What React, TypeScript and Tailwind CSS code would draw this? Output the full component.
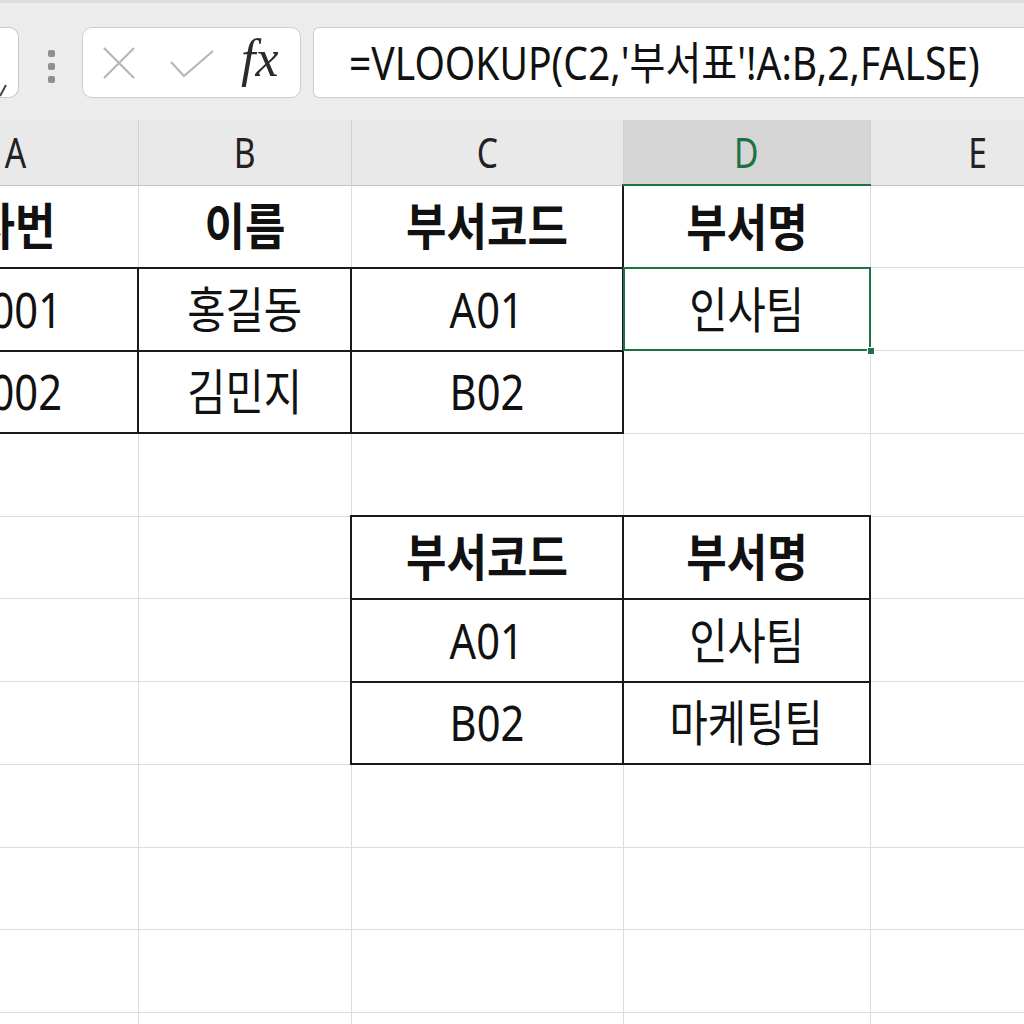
import React from "react";

type Cell = {
  text?: string;
  bold?: boolean;
  border?: string;
  selected?: boolean;
};

const GRID = "border border-[#dcdcdc]";
const BOX = "border-2 border-[#1a1a1a]";

const rows: Cell[][] = [
  [
    { text: "사번", bold: true, border: "border border-[#dcdcdc] border-b-2 border-b-[#1a1a1a]" },
    { text: "이름", bold: true, border: "border border-[#dcdcdc] border-b-2 border-b-[#1a1a1a]" },
    { text: "부서코드", bold: true, border: "border border-[#dcdcdc] border-b-2 border-b-[#1a1a1a] border-r-2 border-r-[#1a1a1a]" },
    { text: "부서명", bold: true },
    {},
  ],
  [{ text: "E001", border: BOX }, { text: "홍길동", border: BOX }, { text: "A01", border: BOX }, { text: "인사팀", selected: true }, {}],
  [{ text: "E002", border: BOX }, { text: "김민지", border: BOX }, { text: "B02", border: BOX }, {}, {}],
  [{}, {}, {}, {}, {}],
  [{}, {}, { text: "부서코드", bold: true, border: BOX }, { text: "부서명", bold: true, border: BOX }, {}],
  [{}, {}, { text: "A01", border: BOX }, { text: "인사팀", border: BOX }, {}],
  [{}, {}, { text: "B02", border: BOX }, { text: "마케팅팀", border: BOX }, {}],
  [{}, {}, {}, {}, {}],
  [{}, {}, {}, {}, {}],
  [{}, {}, {}, {}, {}],
  [{}, {}, {}, {}, {}],
];

const letters = ["A", "B", "C", "D", "E"];

function FormulaBar() {
  return (
    <div className="h-[120px] bg-[#ececec] border-t-[3px] border-[#dedede] flex items-start pt-[24px]">
      {/* name box, mostly scrolled off */}
      <div className="relative w-[19px] h-[71px] bg-white border border-[#c9c9c9] border-l-0 rounded-r-[10px] overflow-hidden">
        <svg className="absolute left-0 top-[54px]" width="8" height="16" viewBox="0 0 8 16">
          <path d="M0 14 L6 3" stroke="#444" strokeWidth="2" fill="none" />
        </svg>
      </div>
      <div className="ml-[29px] mt-[23px] flex flex-col gap-[6px]">
        <span className="w-[7px] h-[7px] rounded-[2px] bg-[#8f8f8f]" />
        <span className="w-[7px] h-[7px] rounded-[2px] bg-[#8f8f8f]" />
        <span className="w-[7px] h-[7px] rounded-[2px] bg-[#8f8f8f]" />
      </div>
      <div className="ml-[27px] w-[219px] h-[71px] bg-white border border-[#cdcdcd] rounded-[10px] flex items-center">
        <svg className="ml-[19px]" width="34" height="34" viewBox="0 0 34 34">
          <path d="M2 2 L32 32 M32 2 L2 32" stroke="#b7b7b7" strokeWidth="2.2" fill="none" />
        </svg>
        <svg className="ml-[33px] mt-[2px]" width="46" height="32" viewBox="0 0 46 32">
          <path d="M2 14 L15 28 L44 3" stroke="#b7b7b7" strokeWidth="2.2" fill="none" />
        </svg>
        <span className="ml-[26px] font-['Liberation_Serif',serif] italic text-[52px] leading-none text-[#2b2b2b] -mt-[8px]">
          fx
        </span>
      </div>
      <div className="ml-[12px] flex-1 h-[71px] bg-white border border-[#cdcdcd] border-r-0 rounded-l-[6px] flex items-center pl-[35px] overflow-hidden">
        <span className="inline-block origin-left scale-x-[0.867] whitespace-nowrap text-[45px] leading-none text-[#111]">
          =VLOOKUP(C2,'부서표'!A:B,2,FALSE)
        </span>
      </div>
    </div>
  );
}

export default function App() {
  return (
    <div className="w-[1024px] h-[1024px] overflow-hidden bg-white font-['Noto_Sans','Noto_Sans_CJK_KR',sans-serif]">
      <FormulaBar />
      <table className="ml-[-109px] border-collapse table-fixed w-[1194px]">
        <colgroup>
          <col className="w-[246px]" />
          <col className="w-[213px]" />
          <col className="w-[272px]" />
          <col className="w-[247px]" />
          <col className="w-[216px]" />
        </colgroup>
        <thead>
          <tr className="h-[65px]">
            {letters.map((l) =>
              l === "D" ? (
                <th
                  key={l}
                  className="bg-[#d5d5d5] border border-[#cfcfcf] border-t-0 border-b-2 border-b-[#1e7145] font-normal text-[#1e7145] p-0"
                >
                  <span className="inline-block scale-x-[0.8] text-[42px] leading-none">{l}</span>
                </th>
              ) : (
                <th
                  key={l}
                  className="bg-[#e9e9e9] border border-[#d2d2d2] border-t-0 border-b-[#c4c4c4] font-normal text-[#222] p-0"
                >
                  <span className="inline-block scale-x-[0.8] text-[42px] leading-none">{l}</span>
                </th>
              )
            )}
          </tr>
        </thead>
        <tbody>
          {rows.map((row, ri) => (
            <tr key={ri} className="h-[82.75px]">
              {row.map((c, ci) => (
                <td
                  key={ci}
                  className={`${c.border ?? GRID} ${c.selected ? "relative" : ""} text-center p-0 text-[#111]`}
                >
                  {c.text && (
                    <span
                      className={
                        c.bold
                          ? "inline-block scale-x-[0.88] whitespace-nowrap text-[50px] font-bold leading-none"
                          : "inline-block scale-x-[0.85] whitespace-nowrap text-[49px] leading-none"
                      }
                    >
                      {c.text}
                    </span>
                  )}
                  {c.selected && (
                    <>
                      <div className="absolute -left-[1px] -top-[1px] -right-[1px] -bottom-[1px] border-2 border-[#1e7145]" />
                      <div className="absolute -right-[5px] -bottom-[5px] w-[8px] h-[8px] bg-[#1e7145] border border-white" />
                    </>
                  )}
                </td>
              ))}
            </tr>
          ))}
        </tbody>
      </table>
    </div>
  );
}
